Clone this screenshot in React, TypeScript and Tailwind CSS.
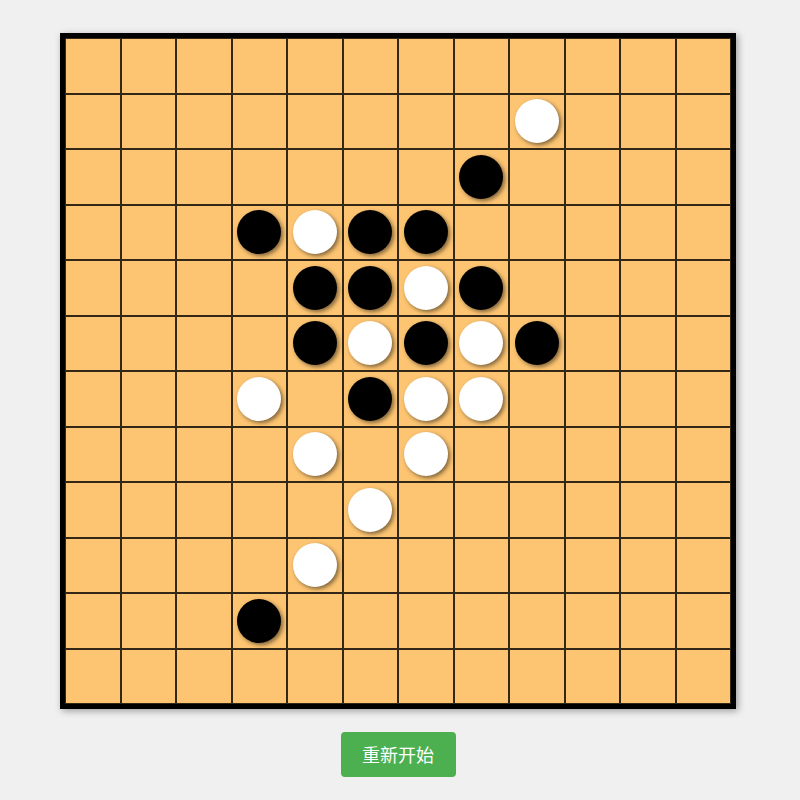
import React, { useState } from 'react';

type Stone = 'b' | 'w' | null;

const initialStones: [number, number, Stone][] = [
    [1, 8, 'w'],
    [2, 7, 'b'],
    [3, 3, 'b'], [3, 4, 'w'], [3, 5, 'b'], [3, 6, 'b'],
    [4, 4, 'b'], [4, 5, 'b'], [4, 6, 'w'], [4, 7, 'b'],
    [5, 4, 'b'], [5, 5, 'w'], [5, 6, 'b'], [5, 7, 'w'], [5, 8, 'b'],
    [6, 3, 'w'], [6, 5, 'b'], [6, 6, 'w'], [6, 7, 'w'],
    [7, 4, 'w'], [7, 6, 'w'],
    [8, 5, 'w'],
    [9, 4, 'w'],
    [10, 3, 'b'],
];

const SIZE = 12;

const buildBoard = (): Stone[][] => {
    const board: Stone[][] = Array.from({ length: SIZE }, () => Array(SIZE).fill(null));
    initialStones.forEach(([r, c, s]) => {
        board[r][c] = s;
    });
    return board;
};

export default function App() {
    const [board, setBoard] = useState<Stone[][]>(buildBoard);

    return (
        <div className="min-h-[800px] bg-[#f0f0f0]">
            <div className="w-[796px] flex flex-col items-center pt-[33px]">
                {/* Board */}
                <div className="w-[676px] h-[676px] border-[5px] border-black bg-[#fdc572] grid grid-cols-12 grid-rows-12 shadow-[2px_2px_7px_rgba(0,0,0,0.35)]">
                    {board.map((row, r) =>
                        row.map((cell, c) => (
                            <div
                                key={`${r}-${c}`}
                                className="border border-[#000000]/80 flex items-center justify-center"
                            >
                                {cell === 'b' && (
                                    <div className="w-[44px] h-[44px] rounded-full bg-black shadow-[2px_2px_4px_rgba(0,0,0,0.5)]" />
                                )}
                                {cell === 'w' && (
                                    <div className="w-[44px] h-[44px] rounded-full bg-white shadow-[2px_2px_4px_rgba(0,0,0,0.5)]" />
                                )}
                            </div>
                        ))
                    )}
                </div>

                {/* Restart */}
                <button
                    onClick={() => setBoard(Array.from({ length: SIZE }, () => Array(SIZE).fill(null)))}
                    className="mt-[23px] w-[115px] h-[45px] rounded-[4px] bg-[#4caf50] text-white text-[18px] font-['Noto_Sans_CJK_SC',sans-serif]"
                >
                    重新开始
                </button>
            </div>
        </div>
    );
}
